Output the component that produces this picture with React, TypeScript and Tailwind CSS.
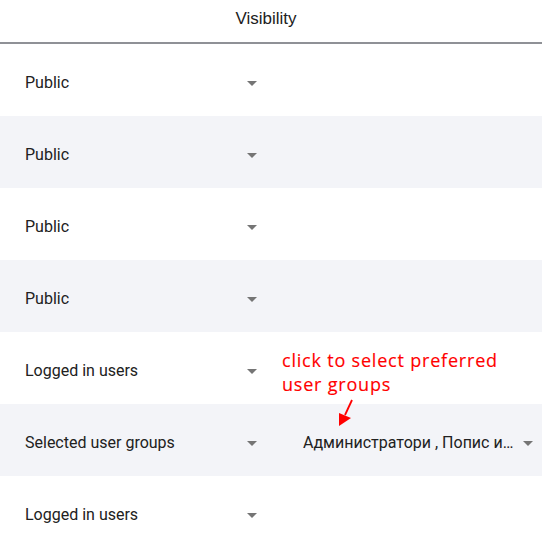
import React from "react";

const rows = [
  { value: "Public" },
  { value: "Public" },
  { value: "Public" },
  { value: "Public" },
  { value: "Logged in users" },
  { value: "Selected user groups", groups: "Администратори , Попис издавања" },
  { value: "Logged in users" },
];

function Caret() {
  return (
    <span className="block w-0 h-0 border-l-[5px] border-r-[5px] border-t-[5px] border-l-transparent border-r-transparent border-t-[#757575]" />
  );
}

export default function App() {
  return (
    <div className="w-[542px] h-[543px] overflow-hidden bg-white" style={{ fontFamily: "Roboto, sans-serif" }}>
      {/* Header */}
      <div className="h-[44px] border-b-2 border-[#8f9196] flex items-center justify-center pr-[10px] pb-[4px]">
        <span className="text-[17px] text-[#212121]" style={{ fontFamily: "'Liberation Sans', Arial, sans-serif" }}>
          Visibility
        </span>
      </div>

      {rows.map((row, i) => (
        <div
          key={i}
          className={`relative h-[72px] pt-[6px] flex items-center ${i % 2 === 1 ? "bg-[#f3f4f8]" : "bg-white"}`}
        >
          <div className="w-[280px] pl-[25px] pr-[23px] flex items-center justify-between">
            <span className="text-[16px] text-[#212121]">{row.value}</span>
            <Caret />
          </div>
          {row.groups && (
            <div className="flex-1 pl-[23px] pr-[9px] flex items-center justify-between">
              <span className="block max-w-[212px] truncate text-[16px] text-[#212121]">{row.groups}</span>
              <Caret />
            </div>
          )}
          {/* annotation */}
          {i === 4 && (
            <div
              className="absolute left-[282px] top-[16px] text-[18px] leading-[24px] tracking-[0.8px] text-[#ff0000] z-10"
              style={{ fontFamily: "'Open Sans', sans-serif", WebkitTextStroke: "0.15px #ff0000" }}
            >
              click to select preferred
              <br />
              user groups
            </div>
          )}
          {i === 5 && (
            <svg className="absolute left-[334px] top-[-6px] z-10" width="22" height="32" viewBox="0 0 22 32">
              <line x1="18" y1="2" x2="11" y2="17" stroke="#ff0000" strokeWidth="1.8" />
              <polygon points="5,28 5,15 17,20" fill="#ff0000" />
            </svg>
          )}
        </div>
      ))}
    </div>
  );
}
